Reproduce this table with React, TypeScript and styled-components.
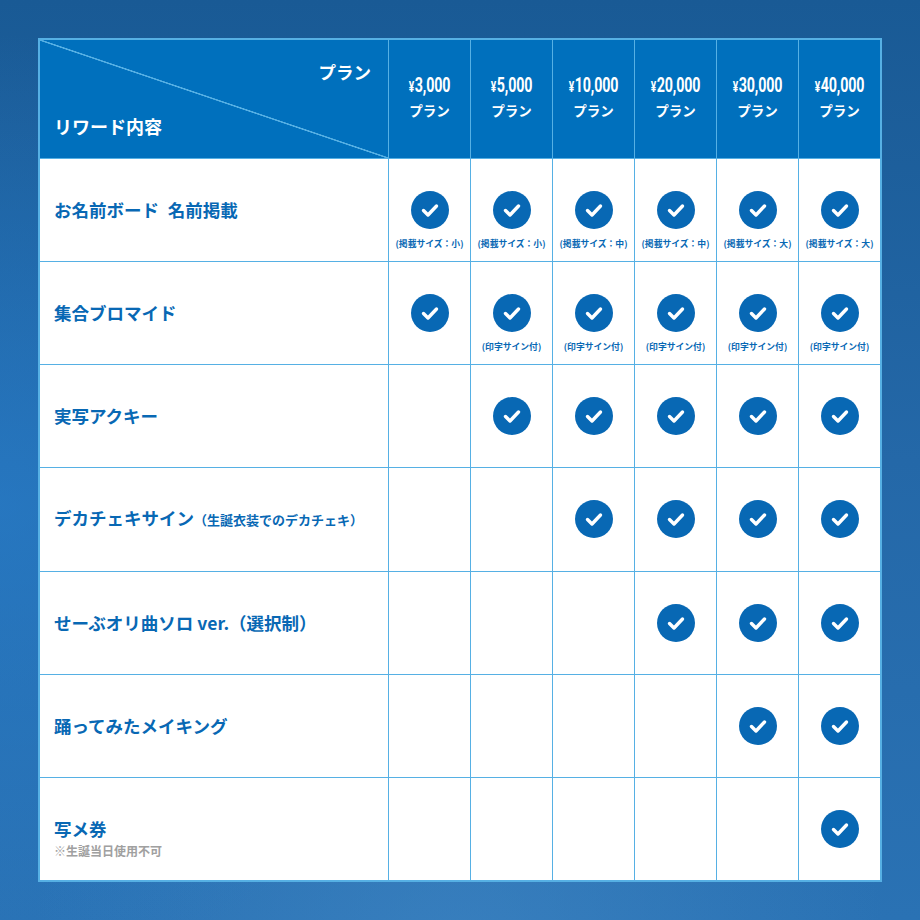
import React from "react";
import styled, { createGlobalStyle } from "styled-components";

const GlobalStyle = createGlobalStyle`
  html, body {
    margin: 0;
    padding: 0;
  }
  body {
    font-family: "Noto Sans CJK JP", "Noto Sans", sans-serif;
  }
`;

type Cell = { on: boolean; note?: string };

interface Reward {
  title: string;
  sub?: string;
  note?: string;
  cells: Cell[];
}

const plans = ["3,000", "5,000", "10,000", "20,000", "30,000", "40,000"];

const on = (note?: string): Cell => ({ on: true, note });
const off: Cell = { on: false };

const rewards: Reward[] = [
  {
    title: "お名前ボード\u2002名前掲載",
    cells: [
      on("(掲載サイズ：小)"),
      on("(掲載サイズ：小)"),
      on("(掲載サイズ：中)"),
      on("(掲載サイズ：中)"),
      on("(掲載サイズ：大)"),
      on("(掲載サイズ：大)"),
    ],
  },
  {
    title: "集合ブロマイド",
    cells: [
      on(),
      on("(印字サイン付)"),
      on("(印字サイン付)"),
      on("(印字サイン付)"),
      on("(印字サイン付)"),
      on("(印字サイン付)"),
    ],
  },
  { title: "実写アクキー", cells: [off, on(), on(), on(), on(), on()] },
  {
    title: "デカチェキサイン",
    sub: "（生誕衣装でのデカチェキ）",
    cells: [off, off, on(), on(), on(), on()],
  },
  { title: "せーぶオリ曲ソロ ver.（選択制）", cells: [off, off, off, on(), on(), on()] },
  { title: "踊ってみたメイキング", cells: [off, off, off, off, on(), on()] },
  {
    title: "写メ券",
    note: "※生誕当日使用不可",
    cells: [off, off, off, off, off, on()],
  },
];

const CheckIcon: React.FC = () => (
  <svg width="38" height="38" viewBox="0 0 38 38">
    <circle cx="19" cy="19" r="19" fill="#0868b4" />
    <path
      d="M12.5 19.5 L17 24 L25.5 15"
      fill="none"
      stroke="#fff"
      strokeWidth="3.4"
      strokeLinecap="round"
      strokeLinejoin="round"
    />
  </svg>
);

const App: React.FC = () => {
  return (
    <Page>
      <GlobalStyle />
      <Table>
        <Corner>
          <CornerTop>プラン</CornerTop>
          <CornerBottom>リワード内容</CornerBottom>
        </Corner>
        {plans.map((p) => (
          <PlanHead key={p}>
            <Price>
              <Yen>¥</Yen>
              {p}
            </Price>
            <PlanLabel>プラン</PlanLabel>
          </PlanHead>
        ))}
        {rewards.map((r) => (
          <React.Fragment key={r.title}>
            <RewardCell>
              <RewardTitle>
                {r.title}
                {r.sub && <RewardSub>{r.sub}</RewardSub>}
              </RewardTitle>
              {r.note && <RewardNote>{r.note}</RewardNote>}
            </RewardCell>
            {r.cells.map((c, i) => (
              <MarkCell key={i}>
                {c.on && (
                  <>
                    <MarkSlot>
                      <CheckIcon />
                    </MarkSlot>
                    {c.note && <MarkNote>{c.note}</MarkNote>}
                  </>
                )}
              </MarkCell>
            ))}
          </React.Fragment>
        ))}
      </Table>
    </Page>
  );
};

const Page = styled.div`
  width: 920px;
  height: 920px;
  box-sizing: border-box;
  padding: 38px;
  background:
    radial-gradient(circle at 0% 55%, rgba(40, 130, 210, 0.55), transparent 45%),
    radial-gradient(circle at 50% 105%, rgba(70, 140, 200, 0.5), transparent 40%),
    linear-gradient(180deg, #195a95 0%, #2468a8 50%, #2a72b4 100%);
`;

const Table = styled.div`
  display: grid;
  grid-template-columns: 348px repeat(6, 1fr);
  grid-template-rows: 118px repeat(7, 1fr);
  gap: 1px;
  width: 844px;
  height: 844px;
  box-sizing: border-box;
  border: 2px solid #56b0e4;
  background: #56b0e4;
`;

const Corner = styled.div`
  display: flex;
  flex-direction: column;
  justify-content: space-between;
  padding: 20px 17px 20px 14px;
  background:
    linear-gradient(
      to top right,
      transparent calc(50% - 1px),
      #56b0e4 calc(50% - 0.5px),
      #56b0e4 calc(50% + 0.5px),
      transparent calc(50% + 1px)
    ),
    #0070bd;
  color: #fff;
  font-weight: 700;
  font-size: 17.5px;
  line-height: 24px;
`;

const CornerTop = styled.div`
  text-align: right;
`;

const CornerBottom = styled.div`
  text-align: left;
  font-size: 18px;
`;

const PlanHead = styled.div`
  display: flex;
  flex-direction: column;
  align-items: center;
  justify-content: center;
  padding-bottom: 6px;
  background: #0070bd;
  color: #fff;
`;

const Price = styled.div`
  font-family: Roboto, "Liberation Sans", sans-serif;
  font-weight: 700;
  font-size: 21px;
  line-height: 25px;
  letter-spacing: -0.2px;
  transform: scaleX(0.68);
  white-space: nowrap;
`;

const Yen = styled.span`
  font-size: 15px;
  margin-right: 1px;
`;

const PlanLabel = styled.div`
  font-weight: 700;
  font-size: 13.5px;
  line-height: 18px;
  margin-top: 1px;
`;

const RewardCell = styled.div`
  display: grid;
  grid-template-rows: 1fr auto 1fr;
  padding-left: 14px;
  background: #fff;
`;

const RewardTitle = styled.div`
  grid-row: 2;
  color: #0868b4;
  font-weight: 700;
  font-size: 17.5px;
  line-height: 24px;
  white-space: nowrap;
`;

const RewardSub = styled.span`
  font-size: 13px;
`;

const RewardNote = styled.div`
  grid-row: 3;
  align-self: start;
  color: #a0a0a0;
  font-weight: 700;
  font-size: 12px;
  line-height: 15px;
  margin-top: 2px;
`;

const MarkCell = styled.div`
  display: grid;
  grid-template-rows: 1fr auto 1fr;
  justify-items: center;
  background: #fff;
`;

const MarkSlot = styled.div`
  grid-row: 2;
  display: flex;
`;

const MarkNote = styled.div`
  grid-row: 3;
  align-self: start;
  margin-top: 9px;
  color: #0868b4;
  font-weight: 700;
  font-size: 8.8px;
  line-height: 11px;
  white-space: nowrap;
`;

export default App;
